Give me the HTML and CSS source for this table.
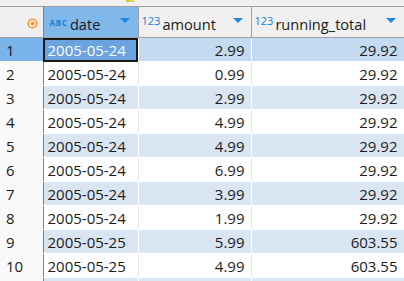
FILE: index.html
```html
<!DOCTYPE html>
<html lang="en">
<head>
    <meta charset="UTF-8">
    <title>Result grid</title>
    <link rel="stylesheet" href="styles.css">
</head>
<body>
    <div class="topbar"><span class="mark"></span></div>
    <table class="grid">
        <colgroup>
            <col class="c-num">
            <col class="c-date">
            <col class="c-amount">
            <col class="c-total">
        </colgroup>
        <thead>
            <tr>
                <th class="corner">
                    <svg width="11" height="11" viewBox="0 0 11 11">
                        <circle cx="5.5" cy="5.5" r="4.3" fill="none" stroke="#f39a2e" stroke-width="1.6"></circle>
                        <circle cx="5.5" cy="5.5" r="2" fill="#f39a2e"></circle>
                    </svg>
                </th>
                <th class="selected">
                    <div class="head">
                        <span class="type abc">ABC</span>
                        <span class="name">date</span>
                        <span class="arrow"></span>
                    </div>
                </th>
                <th>
                    <div class="head">
                        <span class="type num">123</span>
                        <span class="name">amount</span>
                        <span class="arrow"></span>
                    </div>
                </th>
                <th>
                    <div class="head">
                        <span class="type num">123</span>
                        <span class="name">running_total</span>
                        <span class="arrow"></span>
                    </div>
                </th>
            </tr>
        </thead>
        <tbody>
            <tr class="odd current"><td class="rn">1</td><td class="active">2005-05-24</td><td class="n">2.99</td><td class="n">29.92</td></tr>
            <tr><td class="rn">2</td><td>2005-05-24</td><td class="n">0.99</td><td class="n">29.92</td></tr>
            <tr class="odd"><td class="rn">3</td><td>2005-05-24</td><td class="n">2.99</td><td class="n">29.92</td></tr>
            <tr><td class="rn">4</td><td>2005-05-24</td><td class="n">4.99</td><td class="n">29.92</td></tr>
            <tr class="odd"><td class="rn">5</td><td>2005-05-24</td><td class="n">4.99</td><td class="n">29.92</td></tr>
            <tr><td class="rn">6</td><td>2005-05-24</td><td class="n">6.99</td><td class="n">29.92</td></tr>
            <tr class="odd"><td class="rn">7</td><td>2005-05-24</td><td class="n">3.99</td><td class="n">29.92</td></tr>
            <tr><td class="rn">8</td><td>2005-05-24</td><td class="n">1.99</td><td class="n">29.92</td></tr>
            <tr class="odd"><td class="rn">9</td><td>2005-05-25</td><td class="n">5.99</td><td class="n">603.55</td></tr>
            <tr><td class="rn">10</td><td>2005-05-25</td><td class="n">4.99</td><td class="n">603.55</td></tr>
            <tr class="odd"><td class="rn"></td><td></td><td></td><td></td></tr>
        </tbody>
    </table>
</body>
</html>
```

FILE: styles.css
```css
body {
    margin: 0;
    background-color: #f0f0f0;
    font-family: "Open Sans", "Noto Sans", sans-serif;
    font-size: 14px;
    color: #1b1b1b;
    overflow: hidden;
}

.topbar {
    height: 7px;
    background-color: #f0f0f0;
    border-bottom: 1px solid #a0a0a0;
    box-sizing: border-box;
    position: relative;
}

.topbar .mark {
    position: absolute;
    left: 126px;
    top: 0;
    width: 8px;
    height: 2px;
    background: linear-gradient(90deg, #b6d43a, #f0d030);
}

.grid {
    border-collapse: collapse;
    table-layout: fixed;
    width: 404px;
}

.c-num { width: 43px; }
.c-date { width: 95px; }
.c-amount { width: 113px; }
.c-total { width: 153px; }

th {
    height: 30px;
    padding: 0;
    background-color: #f0f0f0;
    border-right: 1px solid #a0a0a0;
    border-bottom: 1px solid #a0a0a0;
    font-weight: normal;
    text-align: left;
}

th.corner {
    text-align: right;
    padding-right: 5px;
    border-right: 1px solid #808080;
}

th.corner svg {
    display: block;
    margin-left: auto;
    margin-top: 3px;
}

th.selected {
    background-color: #80b8ec;
}

.head {
    display: flex;
    align-items: center;
    padding: 3px 8px 0 3px;
    font-size: 14.6px;
}

.type {
    color: #1a7fd4;
    margin-right: 2px;
}

.type.abc {
    font-size: 8px;
    font-weight: bold;
    letter-spacing: 0.8px;
    margin-left: 3px;
    margin-top: -3px;
}

.type.num {
    font-size: 11px;
    align-self: flex-start;
    margin-top: -1px;
}

.name {
    flex: 1;
}

.arrow {
    width: 0;
    height: 0;
    border-left: 5px solid transparent;
    border-right: 5px solid transparent;
    border-top: 5px solid #1e86dc;
    margin-top: -6px;
}

td {
    height: 23px;
    padding: 0 4px;
    background-color: #ffffff;
    border-right: 1px solid #e6e6e6;
    border-bottom: 1px solid #ffffff;
    white-space: nowrap;
    font-size: 15px;
}

tr.odd td {
    background-color: #dae5f2;
    border-right-color: #ffffff;
}

tr.current td {
    background-color: #c4daf0;
}

td.n {
    text-align: right;
    padding-right: 6px;
}

td.rn {
    background-color: #f9f9f9;
    border-right: 1px solid #808080;
    padding-left: 6px;
}

tr.odd td.rn {
    background-color: #f9f9f9;
    border-right-color: #808080;
}

tr.current td.rn {
    background-color: #7ab3ea;
}

tr.current td.active {
    background-color: #6aa3de;
    color: #ffffff;
    outline: 2px solid #1a1a1a;
    outline-offset: -2px;
}
```
